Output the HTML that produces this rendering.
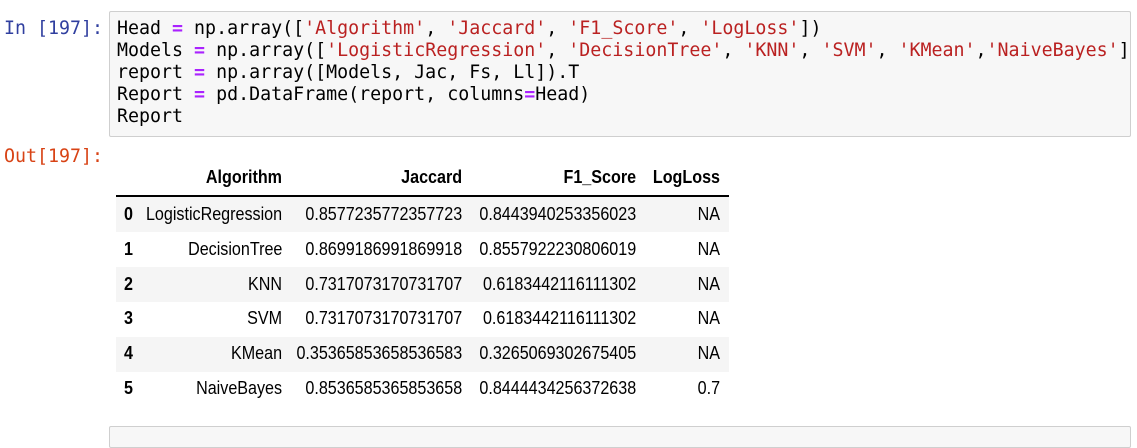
<!DOCTYPE html>
<html><head><meta charset="utf-8"><style>
body{margin:0;width:1137px;height:437px;background:#fff;position:relative;overflow:hidden;font-family:"Liberation Sans",sans-serif}
.mono{font-family:"DejaVu Sans Mono","Liberation Mono",monospace;font-size:18.3px;line-height:22px;white-space:pre;position:absolute}
.box{position:absolute;left:109px;top:11px;width:1020px;height:124px;background:#f7f7f7;border:1px solid #cfcfcf;border-radius:2px}
.k{color:#aa22ff;font-weight:bold}.s{color:#ba2121}
.t{position:absolute;font-size:18px;color:#000;white-space:nowrap;transform:scaleX(.895);line-height:20px}
.r{transform-origin:right center}
.row{position:absolute;left:116px;width:613px;height:35px}
</style></head><body>
<div class="mono" style="left:4px;top:18px;color:#303f9f">In [197]:</div>
<div class="box"></div>
<div class="mono" style="left:117px;top:18px;color:#000">Head <span class="k">=</span> np.array([<span class="s">'Algorithm'</span>, <span class="s">'Jaccard'</span>, <span class="s">'F1_Score'</span>, <span class="s">'LogLoss'</span>])
Models <span class="k">=</span> np.array([<span class="s">'LogisticRegression'</span>, <span class="s">'DecisionTree'</span>, <span class="s">'KNN'</span>, <span class="s">'SVM'</span>, <span class="s">'KMean'</span>,<span class="s">'NaiveBayes'</span>]
report <span class="k">=</span> np.array([Models, Jac, Fs, Ll]).T
Report <span class="k">=</span> pd.DataFrame(report, columns<span class="k">=</span>Head)
Report</div>
<div class="mono" style="left:4px;top:146px;color:#d84315">Out[197]:</div>

<div style="position:absolute;left:116px;top:195px;width:613px;height:2px;background:#000"></div>
<div class="row" style="top:197px;background:#f5f5f5"></div>
<div class="row" style="top:267px;background:#f5f5f5"></div>
<div class="row" style="top:337px;background:#f5f5f5"></div>

<div id="tbl"></div>
<script>
var rows=[["","Algorithm","Jaccard","F1_Score","LogLoss"],
["0","LogisticRegression","0.8577235772357723","0.8443940253356023","NA"],
["1","DecisionTree","0.8699186991869918","0.8557922230806019","NA"],
["2","KNN","0.7317073170731707","0.6183442116111302","NA"],
["3","SVM","0.7317073170731707","0.6183442116111302","NA"],
["4","KMean","0.35365853658536583","0.3265069302675405","NA"],
["5","NaiveBayes","0.8536585365853658","0.8444434256372638","0.7"]];
var rights=[282,462,636,720],h="";
rows.forEach(function(r,i){
 var y=i==0?167:(204+(i-1)*34.8);
 if(r[0])h+='<div class="t" style="left:124px;top:'+y+'px;font-weight:bold;transform-origin:left center">'+r[0]+'</div>';
 for(var j=1;j<5;j++){
  h+='<div class="t r" style="right:'+(1137-rights[j-1])+'px;top:'+y+'px;'+(i==0?'font-weight:bold':'')+'">'+r[j]+'</div>';
 }
});
document.getElementById('tbl').innerHTML=h;
</script>
<div style="position:absolute;left:109px;top:426px;width:1020px;height:20px;background:#f7f7f7;border:1px solid #cfcfcf;border-radius:2px"></div>
</body></html>
